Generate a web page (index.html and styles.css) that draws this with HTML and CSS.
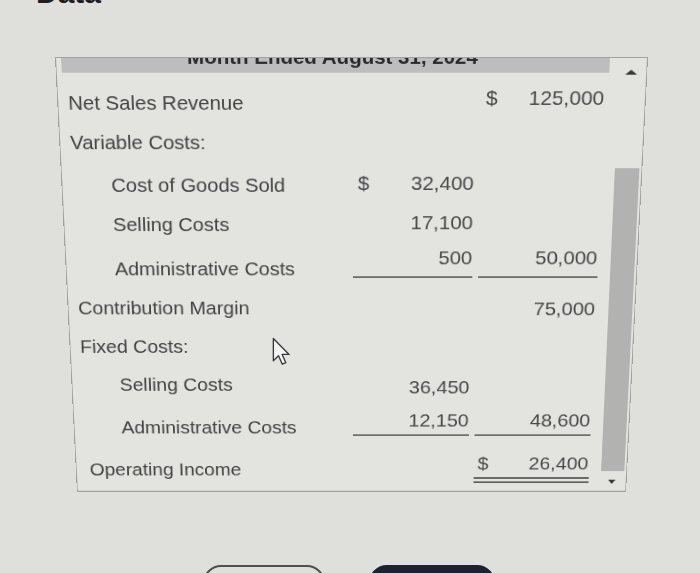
FILE: index.html
```html
<!DOCTYPE html>
<html lang="en">
<head>
<meta charset="utf-8">
<title>Data Table</title>
<link rel="stylesheet" href="styles.css">
</head>
<body>
<h1 class="title">Data</h1>

<div class="panel">
  <div class="sheet">
    <div class="band"><div class="band-text">Month Ended August 31, 2024</div></div>

    <div class="row r-nsr">
      <div class="label l0">Net Sales Revenue</div>
      <div class="num"></div>
      <div class="num"><span class="cur">$</span><span>125,000</span></div>
    </div>

    <div class="row r-vc">
      <div class="label l0">Variable Costs:</div>
      <div class="num"></div>
      <div class="num"></div>
    </div>

    <div class="row r-cogs">
      <div class="label l1">Cost of Goods Sold</div>
      <div class="num"><span class="cur">$</span><span>32,400</span></div>
      <div class="num"></div>
    </div>

    <div class="row r-sc">
      <div class="label l1">Selling Costs</div>
      <div class="num"><span></span><span>17,100</span></div>
      <div class="num"></div>
    </div>

    <div class="row r-ac">
      <div class="label l1">Administrative Costs</div>
      <div class="num line"><span></span><span>500</span></div>
      <div class="num line"><span></span><span>50,000</span></div>
    </div>

    <div class="row r-cm">
      <div class="label l0">Contribution Margin</div>
      <div class="num"></div>
      <div class="num"><span></span><span>75,000</span></div>
    </div>

    <div class="row r-fc">
      <div class="label l0">Fixed Costs:</div>
      <div class="num"></div>
      <div class="num"></div>
    </div>

    <div class="row r-sc2">
      <div class="label l1">Selling Costs</div>
      <div class="num"><span></span><span>36,450</span></div>
      <div class="num"></div>
    </div>

    <div class="row r-ac2">
      <div class="label l1">Administrative Costs</div>
      <div class="num line"><span></span><span>12,150</span></div>
      <div class="num line"><span></span><span>48,600</span></div>
    </div>

    <div class="row r-oi">
      <div class="label l0">Operating Income</div>
      <div class="num"></div>
      <div class="num dline"><span class="cur">$</span><span>26,400</span></div>
    </div>
  </div>

  <div class="scrollbar">
    <div class="arrow-up"></div>
    <div class="thumb"></div>
    <div class="arrow-down"></div>
  </div>
</div>

<div class="actions">
  <button class="btn btn-outline">Print</button>
  <button class="btn btn-dark">Done</button>
</div>

<svg class="cursor" width="19" height="30" viewBox="0 0 14 22" aria-hidden="true">
  <path d="M1 1 L1 17.5 L4.8 13.8 L7.6 20 L10.2 18.9 L7.5 12.8 L12.6 12.8 Z" fill="#f4f4f2" stroke="#3a3a3a" stroke-width="1" stroke-linejoin="round"/>
</svg>
</body>
</html>
```

FILE: styles.css
```css
html, body {
  margin: 0;
  padding: 0;
}

body {
  position: relative;
  background: #dfdfdc;
  font-family: "Liberation Sans", Arial, sans-serif;
  color: #454545;
  height: 573px;
  overflow: hidden;
}

.title {
  margin: -22px 0 0 0;
  padding-left: 36px;
  font-size: 30px;
  line-height: 30px;
  font-weight: bold;
  color: #1e1e1e;
}

.panel {
  margin: 49px 0 0 55px;
  width: 593px;
  box-sizing: border-box;
  border: 1px solid #a2a2a0;
  background: #e3e3e0;
  display: grid;
  grid-template-columns: 1fr 37px;
  transform-origin: 50% 0;
  transform: perspective(1000px) rotateX(-9.66deg);
}

.sheet {
  padding: 0 3.5px 9px 5px;
}

.band {
  height: 15px;
  margin-right: -3.5px;
  background: #bdbdbb;
  overflow: hidden;
  text-align: center;
}

.band-text {
  margin-top: -11px;
  margin-right: 6px;
  font-size: 20.5px;
  line-height: 20px;
  font-weight: bold;
  color: #2a2a2a;
}

.row {
  display: grid;
  grid-template-columns: 1fr 124px 124px;
  column-gap: 5.5px;
  align-items: start;
}

.label {
  font-size: 20.5px;
  line-height: 20px;
  white-space: nowrap;
  color: #424242;
}

.l0 { padding-left: 5px; }
.l1 { padding-left: 45px; }

.num {
  display: flex;
  justify-content: space-between;
  box-sizing: border-box;
  padding: 0 0.5px 0 5px;
  font-size: 21px;
  line-height: 20px;
  color: #484848;
}

.num + .num {
  padding-left: 4.5px;
}

.line {
  border-bottom: 2px solid #6e6e6e;
}

.dline {
  border-bottom: 7px double #5e5e5e;
}

/* row geometry */
.r-nsr  { height: 49px; }
.r-nsr .label { padding-top: 21px; }
.r-nsr .num   { padding-top: 16px; }

.r-vc   { height: 41px; }
.r-vc .label { padding-top: 13px; }

.r-cogs { height: 42px; }
.r-cogs .label { padding-top: 17px; }
.r-cogs .num   { padding-top: 15px; }

.r-sc   { height: 42px; }
.r-sc .label { padding-top: 17px; }
.r-sc .num   { padding-top: 15px; }

.r-ac   { height: 44px; }
.r-ac .label { padding-top: 23px; }
.r-ac .num   { padding-top: 11px; height: 43px; }

.r-cm   { height: 48px; }
.r-cm .label { padding-top: 22px; }
.r-cm .num   { padding-top: 23px; }

.r-fc   { height: 40px; }
.r-fc .label { padding-top: 17px; }

.r-sc2  { height: 44px; }
.r-sc2 .label { padding-top: 20px; }
.r-sc2 .num   { padding-top: 23px; }

.r-ac2  { height: 46px; }
.r-ac2 .label { padding-top: 25px; }
.r-ac2 .num   { padding-top: 17px; height: 45px; }

.r-oi   { height: 54px; }
.r-oi .label { padding-top: 28px; padding-left: 9px; }
.r-oi .num   { padding-top: 21px; height: 54px; }

/* scrollbar */
.scrollbar {
  display: flex;
  flex-direction: column;
  align-items: center;
  padding: 12px 1px 0 8px;
}

.arrow-up {
  width: 0;
  height: 0;
  border-left: 6px solid transparent;
  border-right: 6px solid transparent;
  border-bottom: 5px solid #363636;
}

.thumb {
  margin-top: 97px;
  width: 25px;
  height: 337px;
  background: #b2b2b0;
}

.arrow-down {
  margin-top: 10px;
  width: 0;
  height: 0;
  border-left: 4.5px solid transparent;
  border-right: 4.5px solid transparent;
  border-top: 5px solid #363636;
}

/* bottom buttons */
.actions {
  display: flex;
  gap: 44px;
  margin-top: 32px;
  padding-left: 203px;
}

.btn {
  height: 40px;
  border-radius: 18px;
  font-family: "Liberation Sans", Arial, sans-serif;
  font-size: 16px;
  font-weight: bold;
}

.btn-outline {
  width: 122px;
  background: transparent;
  border: 2px solid #505050;
  color: #333;
}

.btn-dark {
  width: 126px;
  background: #1d2131;
  border: 2px solid #1d2131;
  color: #fff;
}

.cursor {
  position: absolute;
  left: 272px;
  top: 337px;
}
```
